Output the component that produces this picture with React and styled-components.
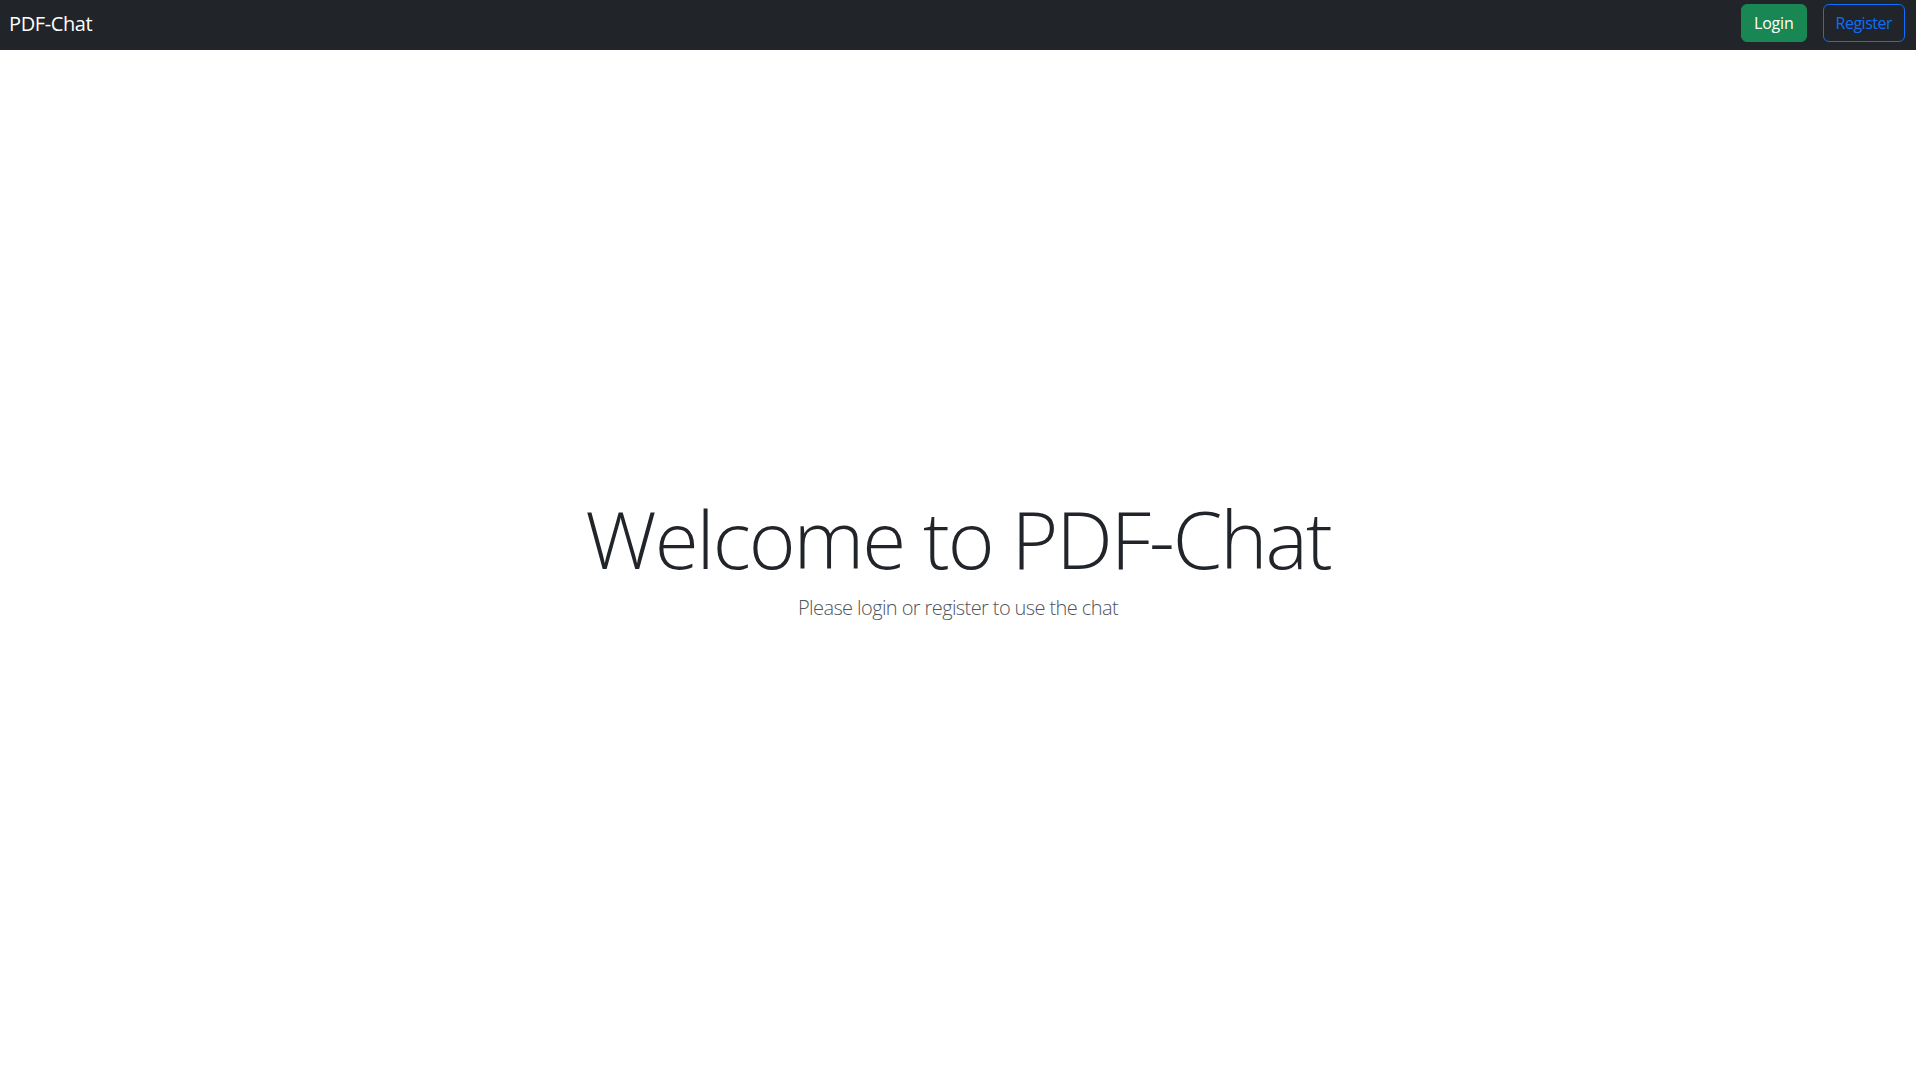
import { createGlobalStyle, styled } from 'styled-components';

const GlobalStyle = createGlobalStyle`
  body {
    margin: 0;
    background: #fff;
    font-family: 'Open Sans', 'Noto Sans', sans-serif;
    color: #212529;
  }
`;

function App() {
  return (
    <>
      <GlobalStyle />
      <Navbar>
        <Brand>PDF-Chat</Brand>
        <NavActions>
          <Button $variant="success">Login</Button>
          <Button $variant="outline">Register</Button>
        </NavActions>
      </Navbar>
      <Main>
        <Title>Welcome to PDF-Chat</Title>
        <Lead>Please login or register to use the chat</Lead>
      </Main>
    </>
  );
}

const Navbar = styled.nav`
  height: 50px;
  background-color: #212529;
  display: flex;
  justify-content: space-between;
  align-items: flex-start;
  padding: 0 11px 0 9px;
  box-sizing: border-box;
`;

const Brand = styled.span`
  color: #fff;
  font-size: 20px;
  line-height: 48px;
  letter-spacing: -0.4px;
`;

const NavActions = styled.div`
  display: flex;
  gap: 16px;
  margin-top: 4px;
`;

const Button = styled.button`
  height: 38px;
  padding: 0 12px;
  font-family: inherit;
  font-size: 16px;
  letter-spacing: ${(p) => (p.$variant === 'success' ? '-0.2px' : '-0.5px')};
  border-radius: 6px;
  cursor: pointer;
  border: 1px solid ${(p) => (p.$variant === 'success' ? '#198754' : '#0d6efd')};
  background: ${(p) => (p.$variant === 'success' ? '#198754' : 'transparent')};
  color: ${(p) => (p.$variant === 'success' ? '#fff' : '#0d6efd')};
`;

const Main = styled.main`
  display: flex;
  flex-direction: column;
  align-items: center;
  padding-top: 440px;
`;

const Title = styled.h1`
  margin: 0 0 7px;
  font-size: 80px;
  font-weight: 300;
  line-height: 96px;
  letter-spacing: -2px;
`;

const Lead = styled.p`
  margin: 0;
  font-size: 20px;
  font-weight: 300;
  line-height: 30px;
  letter-spacing: -0.6px;
  color: #4f565c;
`;

export default App;
